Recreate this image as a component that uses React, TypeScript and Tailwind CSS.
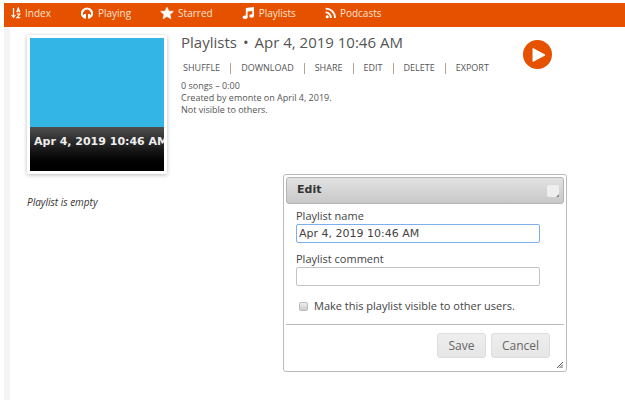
import type { ReactNode } from 'react'

const actions = ['Shuffle', 'Download', 'Share', 'Edit', 'Delete', 'Export']

function SortIcon() {
  return (
    <svg width="10" height="12" viewBox="0 0 10 12" fill="none" stroke="white" strokeWidth="1.2">
      <path d="M2.5 1v9M0.6 8l1.9 2.4L4.4 8" />
      <path d="M5.8 5.2 7.3 1l1.5 4.2M6.2 3.9h2.2M5.8 7h3L6 10.6h3.2" />
    </svg>
  )
}

function HeadphonesIcon() {
  return (
    <svg width="14" height="12" viewBox="0 0 14 12" fill="none" stroke="white">
      <path d="M3 9.4A5 4.9 0 1 1 11 9.4" strokeWidth="2.2" />
      <path d="M5 7v4.6M9 7v4.6" strokeWidth="2" />
      <path d="M2.4 8.6 4.6 10.4M11.6 8.6 9.4 10.4" strokeWidth="2" />
    </svg>
  )
}

function StarIcon() {
  return (
    <svg width="14" height="12" viewBox="0 0 14 12">
      <path d="M7 0l1.9 4 4.6.4L10 7.5l1.1 4.5L7 9.6 2.9 12 4 7.5.5 4.4 5.1 4z" fill="white" stroke="white" strokeWidth="0.5" />
    </svg>
  )
}

function NotesIcon() {
  return (
    <svg width="13" height="12" viewBox="0 0 13 12" fill="white">
      <path d="M3.8 1 12 0v9h-1.8V4L5.6 4.6v5.6H3.8z" />
      <ellipse cx="3.1" cy="10.3" rx="2.6" ry="1.7" />
      <ellipse cx="9.6" cy="9" rx="2.4" ry="1.7" />
    </svg>
  )
}

function FeedIcon() {
  return (
    <svg width="11" height="12" viewBox="0 0 11 12" fill="none" stroke="white" strokeWidth="1.9">
      <circle cx="2.2" cy="9.8" r="1.5" fill="white" stroke="none" />
      <path d="M.6 5.4a5.2 5.2 0 0 1 5.2 5.6M.6 1.6A9.2 9.2 0 0 1 10 11" />
    </svg>
  )
}

function NavLink({ icon, children }: { icon: ReactNode; children: ReactNode }) {
  return (
    <a href="#" className="flex items-center gap-1 text-[10px] text-[#fbe3d6]">
      {icon}
      {children}
    </a>
  )
}

function EditDialog() {
  return (
    <div
      role="dialog"
      aria-labelledby="dialog-title"
      className="absolute top-[174px] left-[283px] w-[284px] rounded-[3px] border border-[#bbb] bg-white p-[2px]"
    >
      <div className="flex h-[27px] items-center justify-between rounded-[3px] border border-[#b4b4b4] bg-linear-to-b from-[#e2e2e2] to-[#c8c8c8] pr-1 pl-[10px]">
        <h2 id="dialog-title" className="font-['DejaVu_Sans',sans-serif] text-[11px] font-bold text-[#333]">Edit</h2>
        <button aria-label="Close" className="flex size-3 items-end justify-end rounded-[2px] bg-[#eee]">
          <svg width="3" height="3" viewBox="0 0 3 3"><path d="M3 0v3H0z" fill="#888" /></svg>
        </button>
      </div>
      <div className="pt-1 pr-6 pb-[10px] pl-[10px] text-[11px] leading-4 text-[#444]">
        <label htmlFor="name" className="block">Playlist name</label>
        <input
          id="name"
          defaultValue="Apr 4, 2019 10:46 AM"
          className="mb-2 block h-[19px] w-full rounded-[2px] border border-[#7faeee] px-[2px] font-['DejaVu_Sans',sans-serif] text-[11px] outline-none"
        />
        <label htmlFor="comment" className="block">Playlist comment</label>
        <input id="comment" className="block h-[19px] w-full rounded-[2px] border border-[#c4c4c4] px-[2px] text-[11px] outline-none" />
        <div className="mt-3 flex items-center gap-[6px] pl-[3px]">
          <input
            id="shared"
            type="checkbox"
            className="size-[9px] appearance-none rounded-[2px] border border-[#bbb] bg-linear-to-b from-[#eee] to-[#ccc]"
          />
          <label htmlFor="shared">Make this playlist visible to other users.</label>
        </div>
      </div>
      <div className="flex justify-end gap-[5px] border-t border-[#bbb] pt-2 pr-[14px] pb-[11px] text-[12px] text-[#666]">
        <button className="h-[25px] w-[49px] rounded-[3px] border border-[#ddd] bg-linear-to-b from-[#eee] to-[#e6e6e6]">Save</button>
        <button className="h-[25px] w-[59px] rounded-[3px] border border-[#ddd] bg-linear-to-b from-[#eee] to-[#e6e6e6]">Cancel</button>
      </div>
      <svg className="absolute right-[3px] bottom-[3px]" width="6" height="6" viewBox="0 0 6 6">
        <path d="M0 6 6 0M2.5 6 6 2.5M4.5 6 6 4.5" stroke="#555" />
      </svg>
    </div>
  )
}

export default function App() {
  return (
    <div className="relative min-h-screen bg-white pt-[3px] pb-[11px] pl-1 font-['Open_Sans',sans-serif] text-[#555]">
      <header className="h-6 bg-[#e65100]">
        <nav className="flex h-5 items-center gap-[29px] pl-[7px]">
          <NavLink icon={<SortIcon />}>Index</NavLink>
          <NavLink icon={<HeadphonesIcon />}>Playing</NavLink>
          <NavLink icon={<StarIcon />}>Starred</NavLink>
          <NavLink icon={<NotesIcon />}>Playlists</NavLink>
          <NavLink icon={<FeedIcon />}>Podcasts</NavLink>
        </nav>
      </header>

      <main className="min-h-[373px] border-l-[6px] border-[#f4f4f4] pt-2 pl-[17px]">
        <div className="flex items-start">
          <div className="flex h-[139px] w-[140px] shrink-0 flex-col border-[3px] border-white bg-[#33b5e5] shadow-[0_1px_4px_#bbb]">
            <div className="mt-auto h-11 overflow-hidden bg-linear-to-b from-[#505050] to-black pl-1 font-['DejaVu_Sans',sans-serif] text-[11px] leading-[30px] font-bold whitespace-nowrap text-[#eee]">
              Apr 4, 2019 10:46 AM
            </div>
          </div>
          <div className="ml-[14px]">
            <h1 className="flex gap-[6px] text-[15px] leading-[15px]">
              <span>Playlists</span>
              <span>•</span>
              <span>Apr 4, 2019 10:46 AM</span>
            </h1>
            <div className="mt-[10px] flex h-4 items-center pl-[2px] text-[9px]">
              {actions.map((action, i) => (
                <div key={action} className="flex items-center">
                  {i > 0 && <span className="mx-[10px] h-[11px] w-px bg-[#b8a090]" />}
                  <a href="#" className="uppercase">{action}</a>
                </div>
              ))}
            </div>
            <div className="mt-1 text-[9px] leading-3">
              <p>0 songs – 0:00</p>
              <p>Created by emonte on April 4, 2019.</p>
              <p>Not visible to others.</p>
            </div>
          </div>
          <button aria-label="Play all" className="mt-[5px] ml-[34px]">
            <svg width="29" height="29" viewBox="0 0 29 29">
              <circle cx="14.5" cy="14.5" r="14.5" fill="#e65100" />
              <path d="M10 8.5v13l12-6.5z" fill="white" stroke="white" strokeLinejoin="round" />
            </svg>
          </button>
        </div>
        <p className="mt-5 text-[10px] leading-4 text-[#333] italic">Playlist is empty</p>
      </main>

      <EditDialog />
    </div>
  )
}
